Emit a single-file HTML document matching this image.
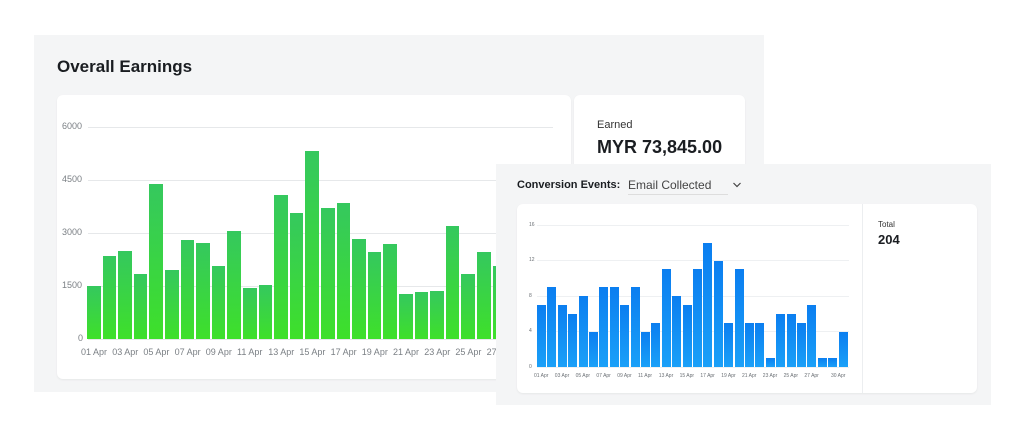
<!DOCTYPE html>
<html><head><meta charset="utf-8"><style>
*{margin:0;padding:0;box-sizing:border-box}
body{width:1024px;height:427px;background:#fff;position:relative;overflow:hidden;font-family:"Liberation Sans",sans-serif;color:#1a1d21}
.a{position:absolute}
.p1{left:34px;top:35px;width:730px;height:357px;background:#f4f5f6}
.card{background:#fff;border-radius:6px;box-shadow:0 1px 2px rgba(0,0,0,.06)}
.g1{height:1px;background:#e6e8ea}
.yl{font-size:9px;color:#7a7f84}
.xl{font-size:9px;color:#7a7f84;white-space:nowrap}
.gb{background:linear-gradient(#35c85e,#3ee02a)}
.bb{background:linear-gradient(#0b7ef0,#1aa0f8)}
.p2{left:496px;top:164px;width:495px;height:241px;background:#f4f5f6}
.xs{font-size:5px;color:#6b7075;white-space:nowrap}
</style></head><body>
<div class="a p1"></div>
<div class="a" style="left:57px;top:57px;font-size:17px;font-weight:bold">Overall Earnings</div>
<div class="a card" style="left:57px;top:95px;width:514px;height:284px"></div>
<div class="a card" style="left:574px;top:95px;width:171px;height:284px"></div>
<div class="a" style="left:597px;top:119px;font-size:11px;color:#333">Earned</div>
<div class="a" style="left:597px;top:137px;font-size:18px;font-weight:bold">MYR 73,845.00</div>
<div id="c1"></div>
<div class="a p2"></div>
<div class="a" style="left:517px;top:179px;font-size:11px;font-weight:bold">Conversion Events:</div>
<div class="a" style="left:628px;top:178px;font-size:12px;color:#444;border-bottom:1px solid #ddd;width:100px;height:17px">Email Collected</div>
<svg class="a" style="left:732px;top:181px" width="10" height="8"><path d="M1.5 2 L5 5.5 L8.5 2" fill="none" stroke="#444" stroke-width="1.2"/></svg>
<div class="a card" style="left:517px;top:204px;width:460px;height:189px"></div>
<div class="a" style="left:862px;top:204px;width:1px;height:189px;background:#eceef0"></div>
<div class="a" style="left:878px;top:220px;font-size:8px;color:#333">Total</div>
<div class="a" style="left:878px;top:232px;font-size:13px;font-weight:bold">204</div>
<div id="c2"></div>
<script>
var h='';
var g=[[127,'6000'],[180,'4500'],[233,'3000'],[286,'1500'],[339,'0']];
g.forEach(function(t){h+='<div class="a g1" style="left:88px;top:'+t[0]+'px;width:465px"></div><div class="a yl" style="left:'+(t[1]=='0'?78:62)+'px;top:'+(t[0]-6)+'px">'+t[1]+'</div>';});
var v=[1500,2350,2480,1830,4380,1960,2800,2730,2070,3060,1430,1540,4080,3570,5330,3720,3850,2820,2450,2700,1270,1320,1360,3200,1830,2460,2070,2000,2200,1800];
v.forEach(function(x,i){var hh=x/6000*212;h+='<div class="a gb" style="left:'+(87+i*15.6)+'px;top:'+(339-hh)+'px;width:13.6px;height:'+hh+'px"></div>';});
for(var i=0;i<15;i++){var d=(2*i+1);h+='<div class="a xl" style="left:'+(81+i*31.2)+'px;top:347px">'+(d<10?'0'+d:d)+' Apr</div>';}
document.getElementById('c1').innerHTML=h;
h='';
var g2=[[225,'16'],[260,'12'],[296,'8'],[331,'4'],[367,'0']];
g2.forEach(function(t){h+='<div class="a g1" style="left:537px;top:'+t[0]+'px;width:312px;background:#eef0f2"></div><div class="a xs" style="left:529px;top:'+(t[0]-3)+'px">'+t[1]+'</div>';});
var w=[7,9,7,6,8,4,9,9,7,9,4,5,11,8,7,11,14,12,5,11,5,5,1,6,6,5,7,1,1,4];
w.forEach(function(x,i){var hh=x*8.875;h+='<div class="a bb" style="left:'+(537+i*10.4)+'px;top:'+(367-hh)+'px;width:9px;height:'+hh+'px"></div>';});
for(var i=0;i<14;i++){var d=2*i+1;h+='<div class="a xs" style="left:'+(534+i*20.8)+'px;top:373px">'+(d<10?'0'+d:d)+' Apr</div>';}
h+='<div class="a xs" style="left:831px;top:373px">30 Apr</div>';
document.getElementById('c2').innerHTML=h;
</script>
</body></html>
